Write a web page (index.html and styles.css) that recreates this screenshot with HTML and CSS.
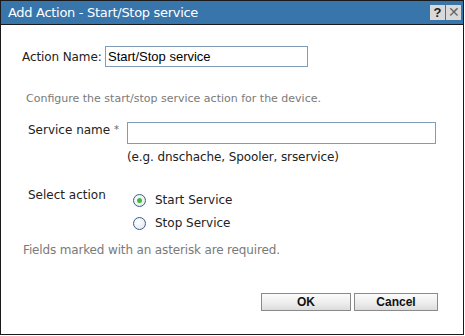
FILE: index.html
```html
<!DOCTYPE html>
<html>
    <head>
        <title>Add Action</title>
        <meta name="viewport" content="width=device-width, initial-scale=1.0">
        <link rel="stylesheet" href="styles.css">
    </head>
<body>
    <div class='dialog'>
        <div class='titlebar'>
            <span class='title'>Add Action - Start/Stop service</span>
            <div class='title-buttons'>
                <span class='tbtn'>?</span>
                <span class='tbtn tbtn-close'>&#x2715;</span>
            </div>
        </div>

        <div class='content'>
            <div class='name-row'>
                <label class='name-label'>Action Name:</label>
                <input class='name-input' type='text' value='Start/Stop service'>
            </div>

            <p class='hint'>Configure the start/stop service action for the device.</p>

            <div class='field-row'>
                <div class='field-label'>Service name <span class='req'>*</span></div>
                <div class='field-body'>
                    <input class='svc-input' type='text'>
                    <div class='example'>(e.g. dnschache, Spooler, srservice)</div>
                </div>
            </div>

            <div class='field-row action-row'>
                <div class='field-label'>Select action</div>
                <div class='field-body radios'>
                    <label class='radio'><span class='dot checked'></span>Start Service</label>
                    <label class='radio'><span class='dot'></span>Stop Service</label>
                </div>
            </div>

            <p class='hint required'>Fields marked with an asterisk are required.</p>
        </div>

        <div class='footer'>
            <button class='button'>OK</button>
            <button class='button'>Cancel</button>
        </div>
    </div>
</body>
</html>
```

FILE: styles.css
```css
html {
    font-family: 'DejaVu Sans', sans-serif;
}
body {
    margin: 0;
    background: #fff;
}
.dialog {
    width: 464px;
    height: 335px;
    box-sizing: border-box;
    border: 1px solid #1a1a1a;
    display: flex;
    flex-direction: column;
}
.titlebar {
    height: 23px;
    background: #3875aa;
    border-bottom: 1px solid #1a1a1a;
    display: flex;
    align-items: center;
    padding-left: 7px;
    padding-right: 2px;
}
.title {
    flex: 1;
    color: #fff;
    font-size: 13px;
    letter-spacing: -0.3px;
}
.title-buttons {
    display: flex;
    gap: 1px;
}
.tbtn {
    width: 15px;
    height: 15px;
    background: #d9d9d9;
    color: #222;
    font-size: 13px;
    font-weight: bold;
    line-height: 15px;
    text-align: center;
    font-family: 'Liberation Sans', sans-serif;
}
.tbtn-close {
    color: #666;
    font-weight: normal;
    font-size: 14px;
}
.content {
    flex: 1;
    padding: 21px 0 0 21px;
    font-size: 12px;
    line-height: 14px;
    color: #222;
}
.name-row {
    display: flex;
    align-items: center;
}
.name-label {
    flex: none;
    width: 83px;
    white-space: nowrap;
    letter-spacing: -0.1px;
}
.name-input {
    width: 203px;
    height: 21px;
    box-sizing: border-box;
    border: 1px solid #7f9db9;
    padding: 0 2px;
    font-family: 'Liberation Sans', sans-serif;
    font-size: 13px;
    color: #000;
    margin: 0;
}
.hint {
    color: #7a7a7a;
    margin: 25px 0 0 4px;
    font-size: 11px;
}
.field-row {
    display: flex;
    margin: 16px 0 0 6px;
}
.field-label {
    width: 99px;
    padding-top: 1px;
}
.req {
    color: #666;
    font-size: 10px;
    vertical-align: top;
}
.svc-input {
    width: 309px;
    height: 22px;
    box-sizing: border-box;
    border: 1px solid #7f9db9;
    margin: 0;
    display: block;
}
.example {
    margin-top: 6px;
    letter-spacing: -0.1px;
}
.action-row {
    margin-top: 23px;
}
.radios {
    display: flex;
    flex-direction: column;
    gap: 9px;
    padding-left: 6px;
    padding-top: 6px;
}
.radio {
    display: flex;
    align-items: center;
    gap: 9px;
}
.dot {
    width: 11px;
    height: 11px;
    border-radius: 50%;
    border: 1px solid #3c5e87;
    background: radial-gradient(circle at 40% 40%, #ffffff 0%, #dfe3ea 100%);
    display: flex;
    align-items: center;
    justify-content: center;
}
.dot.checked::after {
    content: '';
    width: 5px;
    height: 5px;
    border-radius: 50%;
    background: #3dbb3d;
}
.required {
    margin: 13px 0 0 1px;
    font-size: 12px;
    letter-spacing: -0.15px;
}
.footer {
    display: flex;
    justify-content: flex-end;
    gap: 3px;
    padding: 0 25px 23px 0;
}
.button {
    width: 90px;
    height: 18px;
    border: 1px solid #8a8a8a;
    background: linear-gradient(to bottom, #fbfbfb 0%, #ececec 60%, #dcdcdc 100%);
    font-family: 'Liberation Sans', Arial, sans-serif;
    font-weight: bold;
    font-size: 12px;
    color: #111;
    padding: 0;
    line-height: 16px;
}
.button + .button {
    width: 84px;
}
```
